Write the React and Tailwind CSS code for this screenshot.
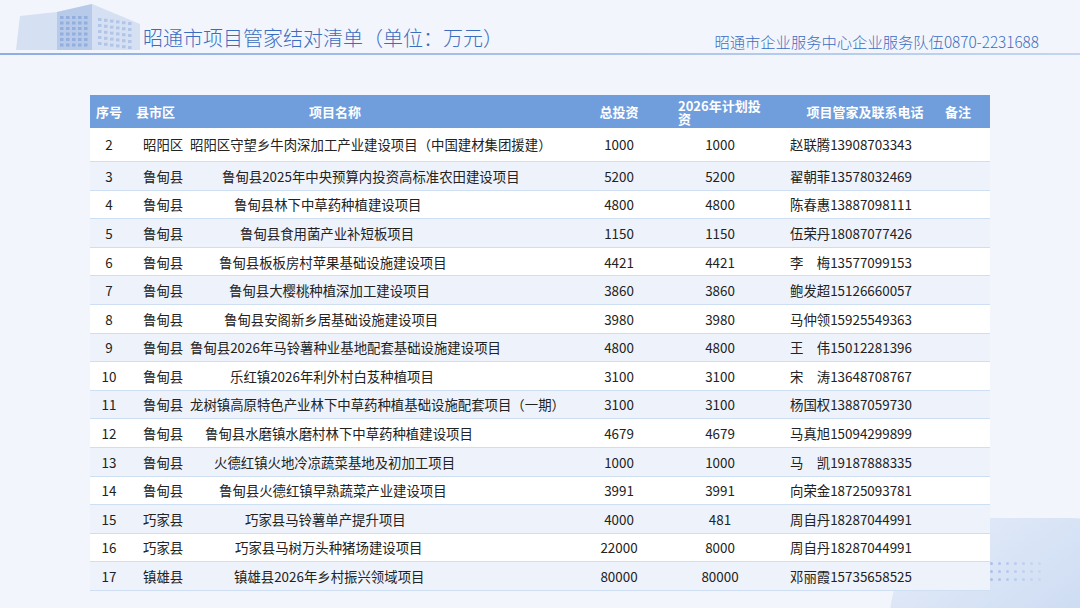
const rows = [
  ["2","昭阳区","昭阳区守望乡牛肉深加工产业建设项目（中国建材集团援建）","1000","1000","赵联腾13908703343",190],
  ["3","鲁甸县","鲁甸县2025年中央预算内投资高标准农田建设项目","5200","5200","翟朝菲13578032469",222],
  ["4","鲁甸县","鲁甸县林下中草药种植建设项目","4800","4800","陈春惠13887098111",234],
  ["5","鲁甸县","鲁甸县食用菌产业补短板项目","1150","1150","伍荣丹18087077426",240],
  ["6","鲁甸县","鲁甸县板板房村苹果基础设施建设项目","4421","4421","李　梅13577099153",219],
  ["7","鲁甸县","鲁甸县大樱桃种植深加工建设项目","3860","3860","鲍发超15126660057",229],
  ["8","鲁甸县","鲁甸县安阁新乡居基础设施建设项目","3980","3980","马仲领15925549363",224],
  ["9","鲁甸县","鲁甸县2026年马铃薯种业基地配套基础设施建设项目","4800","4800","王　伟15012281396",190],
  ["10","鲁甸县","乐红镇2026年利外村白芨种植项目","3100","3100","宋　涛13648708767",230],
  ["11","鲁甸县","龙树镇高原特色产业林下中草药种植基础设施配套项目（一期）","3100","3100","杨国权13887059730",190],
  ["12","鲁甸县","鲁甸县水磨镇水磨村林下中草药种植建设项目","4679","4679","马真旭15094299899",205],
  ["13","鲁甸县","火德红镇火地冷凉蔬菜基地及初加工项目","1000","1000","马　凯19187888335",214],
  ["14","鲁甸县","鲁甸县火德红镇早熟蔬菜产业建设项目","3991","3991","向荣金18725093781",219],
  ["15","巧家县","巧家县马铃薯单产提升项目","4000","481","周自丹18287044991",245],
  ["16","巧家县","巧家县马树万头种猪场建设项目","22000","8000","周自丹18287044991",235],
  ["17","镇雄县","镇雄县2026年乡村振兴领域项目","80000","80000","邓丽霞15735658525",234],
];
const F = {fontFamily:'"Noto Sans CJK SC","Noto Sans",sans-serif'};
export default function App(){
  return (
    <div className="w-[1080px] h-[608px] relative overflow-hidden bg-[#f2f5fb]" style={F}>
      <div className="absolute right-[-90px] bottom-[-110px] w-[280px] h-[200px] rounded-full bg-gradient-to-br from-[#e6edf9] to-[#bcd0ef]"/>
      <div className="absolute left-[990px] top-[562px] grid grid-cols-7 gap-x-[5px] gap-y-[5px]">
        {Array.from({length:21}).map((_,i)=><div key={i} className="w-[3px] h-[3px] rounded-full bg-[#a9c0ea]" style={{opacity:1-(i%7)*0.12}}/>)}
      </div>
      <div className="relative h-[56px] flex items-end">
        <svg className="absolute left-[12px] top-[2px]" width="128" height="50" viewBox="0 0 128 50">
          <path d="M4 48 L8 14 L45 10 L80 2 L135 25 L135 48 Z" fill="#c9d7ef" opacity="0.7"/>
          <path d="M45 10 L80 2 L80 48 L45 48Z" fill="#aac0e6" opacity="0.7"/>
          {Array.from({length:6}).map((_,r)=>Array.from({length:5}).map((_,c)=><rect key={r+'-'+c} x={48+c*6} y={14+r*5.5} width="3.5" height="3" fill="#7d9cd3" opacity="0.6"/>))}
          {Array.from({length:5}).map((_,r)=>Array.from({length:6}).map((_,c)=><rect key={'b'+r+'-'+c} x={86+c*6} y={16+r*6+c*0.8} width="3.5" height="3" fill="#9bb3de" opacity="0.6"/>))}
        </svg>
        <div className="absolute left-[143px] top-[24px] text-[20px] leading-[28px] font-light text-[#3a6dc0]">昭通市项目管家结对清单（单位：万元）</div>
        <div className="absolute right-[41px] top-[31px] text-[15.3px] leading-[20px] font-light text-[#3a6dc0]">昭通市企业服务中心企业服务队伍0870-2231688</div>
        <div className="w-full h-[2px] mb-[1px] bg-gradient-to-r from-[#8eaee3] via-[#a9c2ea] to-[#c3d5f1]"/>
      </div>
      <div className="absolute left-[90px] top-[95px] w-[900px] text-[13.4px] text-[#222]">
        <div className="flex h-[33px] bg-[#709ddc] text-white font-bold text-[13px] items-center">
          <div className="w-[38px] text-center">序号</div>
          <div className="w-[58px] pl-[8px]">县市区</div>
          <div className="w-[402px] text-center pr-[104px]">项目名称</div>
          <div className="w-[62px] text-center">总投资</div>
          <div className="w-[140px] pl-[28px] leading-[13px]">2026年计划投<br/>资</div>
          <div className="w-[150px] text-center">项目管家及联系电话</div>
          <div className="w-[36px] text-center">备注</div>
        </div>
        {rows.map((r,i)=>(
          <div key={i} className={`flex items-center border-b border-[#cfdff3] ${i===0?'h-[34px]':'h-[28.6px]'} ${i%2?'bg-[#eef3fb]':'bg-white'} ${i===rows.length-1?'border-[#7aa0da]':''}`}>
            <div className="w-[38px] text-center">{r[0]}</div>
            <div className="w-[58px] pl-[15px] whitespace-nowrap">{r[1]}</div>
            <div className="w-[402px] whitespace-nowrap" style={{paddingLeft:r[6]-186}}>{r[2]}</div>
            <div className="w-[62px] text-center">{r[3]}</div>
            <div className="w-[140px] text-center">{r[4]}</div>
            <div className="w-[150px] whitespace-nowrap">{r[5]}</div>
            <div className="w-[50px]"/>
          </div>
        ))}
      </div>
    </div>
  );
}
